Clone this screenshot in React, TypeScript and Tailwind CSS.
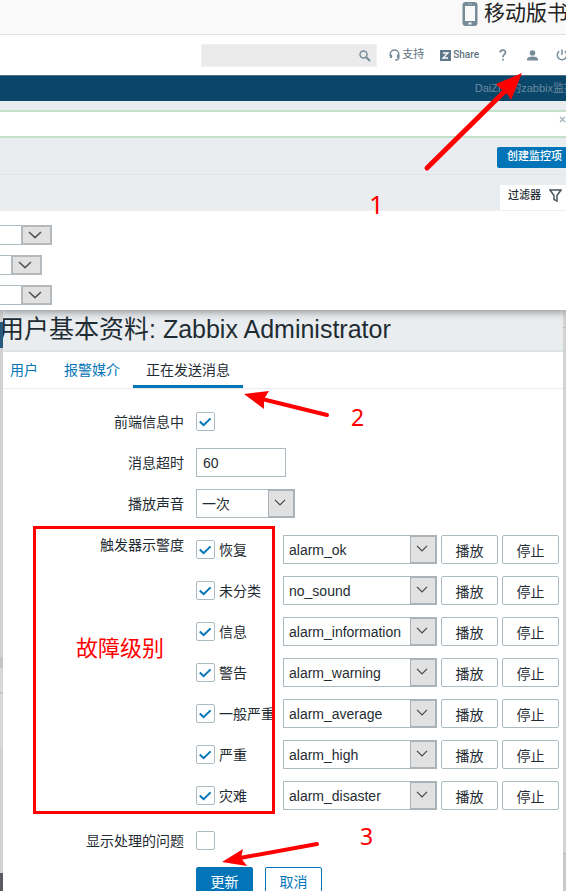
import React from "react";

const severities = [
  { id: "ok", label: "恢复", sound: "alarm_ok" },
  { id: "none", label: "未分类", sound: "no_sound" },
  { id: "info", label: "信息", sound: "alarm_information" },
  { id: "warning", label: "警告", sound: "alarm_warning" },
  { id: "average", label: "一般严重", sound: "alarm_average" },
  { id: "high", label: "严重", sound: "alarm_high" },
  { id: "disaster", label: "灾难", sound: "alarm_disaster" },
];

function Select({ value, label, id, className }: { value: string; label?: string; id?: string; className: string }) {
  return (
    <div className={`relative shrink-0 ${className}`}>
      <select
        id={id}
        aria-label={label}
        defaultValue={value}
        className="block h-full w-full appearance-none border border-[#acbbc2] bg-white pr-7 pl-[5px]"
      >
        <option value={value}>{value}</option>
      </select>
      <span className="pointer-events-none absolute inset-y-0 right-0 flex w-[27px] items-center justify-center border-2 border-l border-[#a9b3b8] bg-[#e1e1e1] pr-0.5 pb-0.5">
        <svg width="12" height="7" viewBox="0 0 12 7" fill="none" stroke="#444" strokeWidth="1.2" aria-hidden="true">
          <path d="M1 0.8 6 5.8 11 0.8" />
        </svg>
      </span>
    </div>
  );
}

function BackSelect({ className, label }: { className: string; label: string }) {
  return (
    <div className={`relative h-5 ${className}`}>
      <select aria-label={label} className="block h-full w-full appearance-none border border-l-0 border-[#acbbc2] bg-white" />
      <span className="pointer-events-none absolute inset-y-0 right-0 flex w-[31px] items-center justify-center border-2 border-[#b3b9bc] bg-[#e1e1e1] pr-1">
        <svg width="14" height="8" viewBox="0 0 14 8" fill="none" stroke="#555" strokeWidth="1.6" aria-hidden="true">
          <path d="M1 1 7 6.6 13 1" />
        </svg>
      </span>
    </div>
  );
}

function Checkbox({ id, checked }: { id: string; checked?: boolean }) {
  return (
    <span className="relative block size-[19px] shrink-0">
      <input
        id={id}
        type="checkbox"
        defaultChecked={checked}
        className="peer block size-full appearance-none rounded-xs border border-[#acbbc2] bg-white"
      />
      <svg
        className="pointer-events-none absolute inset-0 hidden peer-checked:block"
        width="19"
        height="19"
        viewBox="0 0 19 19"
        fill="none"
        stroke="#0275b8"
        strokeWidth="2"
        aria-hidden="true"
      >
        <path d="M3.8 9.6 7.6 13.2 14.6 6.4" />
      </svg>
    </span>
  );
}

function Row({ label, id, children }: { label: string; id: string; children: React.ReactNode }) {
  return (
    <div className="flex h-[29px] items-center gap-3">
      <label htmlFor={id} className="w-[181px] shrink-0 text-right">
        {label}
      </label>
      {children}
    </div>
  );
}

function BackPage() {
  return (
    <div className="relative z-10 bg-white pb-[5px] text-[11px] shadow-[0_2px_8px_rgba(0,0,0,0.4)]">
      <div className="flex h-[35px] items-start justify-end overflow-hidden border-b border-[#dfe1e1] bg-[#f9f9f9]">
        <div className="-mr-0.5 flex items-center gap-1.5 whitespace-nowrap text-[21px] leading-[26px] text-[#222]">
          <svg width="16" height="25" viewBox="0 0 16 25" aria-hidden="true">
            <rect x="0.5" y="1" width="15" height="24" rx="3" fill="#768d99" />
            <rect x="3" y="5" width="10" height="15" fill="#f9f9f9" />
            <rect x="6.5" y="21.5" width="3" height="2" fill="#f9f9f9" />
            <rect x="6" y="2.5" width="4" height="1" fill="#a9b7be" />
          </svg>
          <span>移动版书</span>
        </div>
      </div>

      <header className="flex h-10 items-center justify-end overflow-hidden text-[#5f7480]">
        <div className="relative mr-3 h-[23px] w-[176px]">
          <input type="text" aria-label="搜索" className="block h-full w-full border border-[#f1f1f1] bg-[#ebebeb] pr-6 pl-2" />
          <svg className="absolute top-1.5 right-1.5" width="12" height="12" viewBox="0 0 12 12" fill="none" stroke="#768d99" aria-hidden="true">
            <circle cx="4.5" cy="4.5" r="3.5" strokeWidth="1.5" />
            <path d="M7.2 7.2 11 11" strokeWidth="2" />
          </svg>
        </div>
        <a href="#support" className="mr-4 flex items-center gap-0.5">
          <svg width="11" height="12" viewBox="0 0 11 12" fill="none" stroke="#768d99" aria-hidden="true">
            <path d="M1.2 7V5.3a4.3 4.3 0 0 1 8.6 0V8.5Q9.8 11 6 11" strokeWidth="1.4" />
            <path d="M2 5.5V9M9 5.5V9" strokeWidth="2.2" />
          </svg>
          支持
        </a>
        <a href="#share" className="mr-5 flex items-center gap-0.5 font-[Roboto] text-[10px] font-medium">
          <svg width="11" height="11" viewBox="0 0 11 11" aria-hidden="true">
            <rect width="11" height="11" fill="#60798a" />
            <path d="M3 3h5L3 8h5" fill="none" stroke="#fff" strokeWidth="1.3" />
          </svg>
          Share
        </a>
        <a href="#help" aria-label="帮助" className="mr-5">
          <svg width="8" height="12" viewBox="0 0 8 12" fill="none" stroke="#768d99" strokeWidth="1.7" aria-hidden="true">
            <path d="M1.2 3.5C1.2 0.3 6.5 0.3 6.5 3.3 6.5 5.5 4 5.5 4 8.2" />
            <path d="M4 9.7V11.5" />
          </svg>
        </a>
        <a href="#profile" aria-label="用户基本资料" className="mr-[18px]">
          <svg width="11" height="11" viewBox="0 0 11 11" fill="#768d99" aria-hidden="true">
            <circle cx="5.5" cy="3" r="2.8" />
            <path d="M0 10.5V9Q0.5 6.7 5.5 6.5 10.5 6.7 11 9V10.5Z" />
          </svg>
        </a>
        <a href="#logout" aria-label="退出" className="-mr-0.5">
          <svg width="12" height="12" viewBox="0 0 12 12" fill="none" stroke="#768d99" strokeWidth="1.5" aria-hidden="true">
            <path d="M3.2 2.2a4.7 4.7 0 1 0 5.6 0M6 0.5V6" />
          </svg>
        </a>
      </header>

      <div className="flex h-[26px] items-center justify-end overflow-hidden border-t border-[#4b7182] bg-[#0a466a] whitespace-nowrap text-[#6c8b9e]">
        <span className="-mr-[9px]">DaiZhe的zabbix监控</span>
      </div>

      <div className="bg-[#e9edf0] pt-[9px]">
        <div className="flex h-7 items-start justify-end border-y-2 border-[#c6e1c9] bg-white">
          <button type="button" aria-label="关闭" className="py-1">
            <svg width="7" height="7" viewBox="0 0 7 7" stroke="#a5b3bb" strokeWidth="1.4" aria-hidden="true">
              <path d="M1 1 6 6M6 1 1 6" />
            </svg>
          </button>
        </div>
        <div className="flex h-[37px] items-center justify-end border-b border-[#dfe4e7] pt-0.5">
          <button type="button" className="h-[21px] rounded-l-xs bg-[#0275b8] pr-1 pl-2.5 font-medium text-white">
            创建监控项
          </button>
        </div>
        <div className="flex h-9 items-end justify-end border-b border-[#eeeeee]">
          <button type="button" className="flex h-[25px] items-center gap-2 bg-white pr-1 pb-1 pl-2 font-medium text-[#1f2c33]">
            过滤器
            <svg width="13" height="13" viewBox="0 0 13 13" fill="none" stroke="#4a565d" strokeWidth="1.5" aria-hidden="true">
              <path d="M1 1H12L8 6.5V12L5 10.5V6.5Z" />
            </svg>
          </button>
        </div>
      </div>

      <div className="flex flex-col gap-2.5 pt-3.5">
        <BackSelect label="主机组" className="w-[52px]" />
        <BackSelect label="类型" className="w-[42px]" />
        <BackSelect label="状态" className="w-[52px]" />
      </div>
    </div>
  );
}

function LeftEdge() {
  return (
    <div className="flex w-[3px] shrink-0 flex-col bg-[#d2d2d3]" aria-hidden="true">
      <div className="h-3" />
      <div className="h-[26px] bg-[#28587b]" />
      <div className="h-[310px] border-b border-[#c8c8c8]" />
      <div className="h-2.5 bg-[#c3c4c5]" />
      <div className="h-[26px] border-b-2 border-[#bfc4cb] bg-[#d6d8da]" />
      <div className="h-[54px] bg-[#d8d8d4]" />
      <div className="h-[125px]" />
      <div className="grow bg-[#5c5963]" />
    </div>
  );
}

function RightEdge() {
  return (
    <div className="flex w-[3px] shrink-0 flex-col bg-[#d3d3d3]" aria-hidden="true">
      <div className="h-[18px] border-b border-[#bfbfbf]" />
      <div className="h-[526px] border-b border-[#bdbdbd]" />
      <div className="grow bg-[#c9c9c9]" />
    </div>
  );
}

function Annotations() {
  return (
    <div className="pointer-events-none absolute inset-0 z-20 font-['Noto_Sans','Noto_Sans_CJK_SC',sans-serif] text-[#ff0000]">
      <svg className="absolute top-0 left-0" width="566" height="891" viewBox="0 0 566 891" aria-hidden="true">
        <g stroke="#ff0000" fill="#ff0000" strokeLinecap="round">
          <path d="M427 168 506 90" strokeWidth="5" />
          <path d="M522 73 496 84 502 90 508 95 511 100Z" stroke="none" />
          <path d="M327 415 262 399" strokeWidth="4" />
          <path d="M244 394 269 391 264 399 264 409Z" stroke="none" />
          <path d="M317 844 240 858" strokeWidth="4" />
          <path d="M222 862 243 849 241 858 247 866Z" stroke="none" />
        </g>
      </svg>
      <div className="absolute top-[526px] left-[33px] h-[288px] w-[242px] border-3 border-[#ff0000]" />
      <span className="absolute top-[190px] left-[369px] text-[26px] leading-7">1</span>
      <span className="absolute top-[403px] left-[351px] text-[23px] leading-7">2</span>
      <span className="absolute top-[822px] left-[360px] text-[23px] leading-7">3</span>
      <span className="absolute top-[633px] left-[76px] text-[22px] leading-7">故障级别</span>
    </div>
  );
}

export default function App() {
  return (
    <div className="relative flex h-screen flex-col overflow-hidden bg-white font-['Liberation_Sans','Noto_Sans_CJK_SC',sans-serif] text-sm text-[#1f2c33]">
      <BackPage />
      <div className="flex min-h-0 grow">
        <LeftEdge />
        <main className="min-w-0 grow overflow-hidden bg-white">
          <div className="h-[42px] border-b-2 border-[#dfe4e7] bg-[#e9edf0]">
            <h1 className="-ml-1 text-[25px] leading-[38px] whitespace-nowrap">用户基本资料: Zabbix Administrator</h1>
          </div>
          <nav className="h-[37px] border-b border-[#ebebeb]">
            <div className="-ml-1.5 flex h-9 text-[#0275b8]">
              <a href="#user" className="flex items-center px-[13px]">用户</a>
              <a href="#media" className="flex items-center px-[13px]">报警媒介</a>
              <a href="#messaging" className="flex items-center border-b-3 border-[#0275b8] px-[13px] pt-[3px] text-[#1f2c33]">
                正在发送消息
              </a>
            </div>
          </nav>

          <form className="flex flex-col gap-3 pt-[18px]">
            <Row label="前端信息中" id="frontend">
              <Checkbox id="frontend" checked />
            </Row>
            <Row label="消息超时" id="timeout">
              <input id="timeout" type="text" defaultValue="60" className="h-[29px] w-[90px] border border-[#acbbc2] px-1.5" />
            </Row>
            <Row label="播放声音" id="repeat">
              <Select id="repeat" value="一次" className="h-[29px] w-[99px]" />
            </Row>

            <fieldset className="mt-[5px] flex gap-3">
              <legend className="contents">
                <span className="w-[181px] shrink-0 text-right leading-5">触发器示警度</span>
              </legend>
              <div className="flex flex-col gap-3">
                {severities.map((s) => (
                  <div key={s.id} className="flex h-[29px] items-center gap-1">
                    <div className="flex w-[83px] shrink-0 items-center gap-1">
                      <Checkbox id={s.id} checked />
                      <label htmlFor={s.id} className="whitespace-nowrap">{s.label}</label>
                    </div>
                    <Select label={s.label} value={s.sound} className="h-[29px] w-[154px]" />
                    <button type="button" className="h-[29px] w-[57px] shrink-0 rounded-xs border border-[#acbbc2] bg-white pt-0.5">播放</button>
                    <button type="button" className="h-[29px] w-[57px] shrink-0 rounded-xs border border-[#acbbc2] bg-white pt-0.5">停止</button>
                  </div>
                ))}
              </div>
            </fieldset>

            <div className="pt-1">
              <Row label="显示处理的问题" id="suppressed">
                <Checkbox id="suppressed" />
              </Row>
            </div>
            <div className="flex gap-3 pl-[193px]">
              <button type="submit" className="h-[29px] w-[57px] rounded-xs border border-[#0275b8] bg-[#0275b8] text-white">更新</button>
              <button type="button" className="h-[29px] w-[57px] rounded-xs border border-[#0275b8] bg-white text-[#0275b8]">取消</button>
            </div>
          </form>
        </main>
        <RightEdge />
      </div>
      <Annotations />
    </div>
  );
}
